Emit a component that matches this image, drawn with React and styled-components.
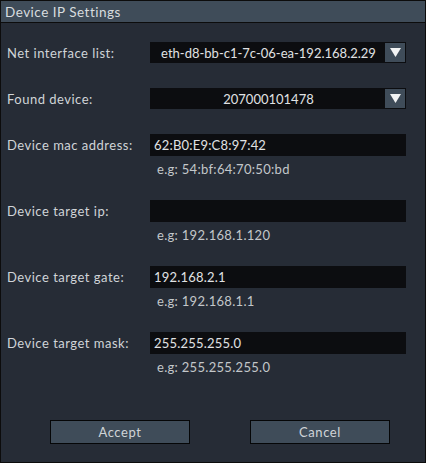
import React from 'react';
import styled, { createGlobalStyle } from 'styled-components';

const GlobalStyle = createGlobalStyle`
  html, body {
    margin: 0;
    padding: 0;
    background: #262c36;
  }
  * {
    box-sizing: border-box;
  }
`;

const Window = styled.div`
  width: 426px;
  height: 463px;
  border: 1px solid #0c0c0c;
  background: #262c36;
  display: flex;
  flex-direction: column;
  font-family: Lato, "Open Sans", sans-serif;
  font-size: 13px;
  color: #d0d4d8;
`;

const TitleBar = styled.div`
  height: 22px;
  background: #3f4c59;
  border-bottom: 1px solid #0c0c0c;
  padding-left: 4px;
  display: flex;
  align-items: center;
  font-size: 13.5px;
  letter-spacing: 0.5px;
  color: #d8dcdf;
`;

const Body = styled.div`
  flex: 1;
  padding: 19px 19px 0 6px;
  display: flex;
  flex-direction: column;
  gap: 25px;
`;

const Row = styled.div`
  display: grid;
  grid-template-columns: 143px 1fr;
  align-items: start;
`;

const Label = styled.div`
  height: ${(p) => p.$h}px;
  display: flex;
  align-items: center;
  letter-spacing: 0.5px;
`;

const Field = styled.div`
  display: flex;
  flex-direction: column;
`;

const Combo = styled.div`
  height: 21px;
  background: #0c0d10;
  display: flex;
  align-items: stretch;
`;

const ComboText = styled.div`
  flex: 1;
  display: flex;
  align-items: center;
  justify-content: center;
  padding-left: 3px;
  color: #e0e2e4;
`;

const ComboButton = styled.div`
  width: 22px;
  background: #3f4c59;
  border: 1px solid #0c0d10;
  display: flex;
  align-items: center;
  justify-content: center;
`;

const Input = styled.div`
  height: 22px;
  background: #0c0d10;
  padding-left: 4px;
  display: flex;
  align-items: center;
  letter-spacing: 0.2px;
  color: #e0e2e4;
`;

const Hint = styled.div`
  margin-top: 7px;
  line-height: 12px;
  padding-left: 7px;
  color: #c3c7ca;
  letter-spacing: 0.3px;
`;

const Buttons = styled.div`
  margin-top: 22px;
  display: flex;
  gap: 60px;
  padding-left: 43px;
`;

const Button = styled.div`
  width: 140px;
  height: 24px;
  background: #3f4c59;
  border: 1px solid #050607;
  display: flex;
  align-items: center;
  justify-content: center;
  letter-spacing: 0.6px;
  color: #d0d4d8;
`;

const Arrow = () => (
  <svg width="11" height="9" viewBox="0 0 11 9">
    <polygon points="0,0 11,0 5.5,9" fill="#f2f3f4" />
  </svg>
);

const fields = [
  { label: 'Device mac address:', value: '62:B0:E9:C8:97:42', hint: 'e.g: 54:bf:64:70:50:bd' },
  { label: 'Device target ip:', value: '', hint: 'e.g: 192.168.1.120' },
  { label: 'Device target gate:', value: '192.168.2.1', hint: 'e.g: 192.168.1.1' },
  { label: 'Device target mask:', value: '255.255.255.0', hint: 'e.g: 255.255.255.0' },
];

const App = () => (
  <>
    <GlobalStyle />
    <Window>
      <TitleBar>Device IP Settings</TitleBar>
      <Body>
        <Row>
          <Label $h={21}>Net interface list:</Label>
          <Combo>
            <ComboText>eth-d8-bb-c1-7c-06-ea-192.168.2.29</ComboText>
            <ComboButton><Arrow /></ComboButton>
          </Combo>
        </Row>
        <Row>
          <Label $h={21}>Found device:</Label>
          <Combo>
            <ComboText>207000101478</ComboText>
            <ComboButton><Arrow /></ComboButton>
          </Combo>
        </Row>
        {fields.map((f) => (
          <Row key={f.label}>
            <Label $h={22}>{f.label}</Label>
            <Field>
              <Input>{f.value}</Input>
              <Hint>{f.hint}</Hint>
            </Field>
          </Row>
        ))}
        <Buttons>
          <Button>Accept</Button>
          <Button>Cancel</Button>
        </Buttons>
      </Body>
    </Window>
  </>
);

export default App;
